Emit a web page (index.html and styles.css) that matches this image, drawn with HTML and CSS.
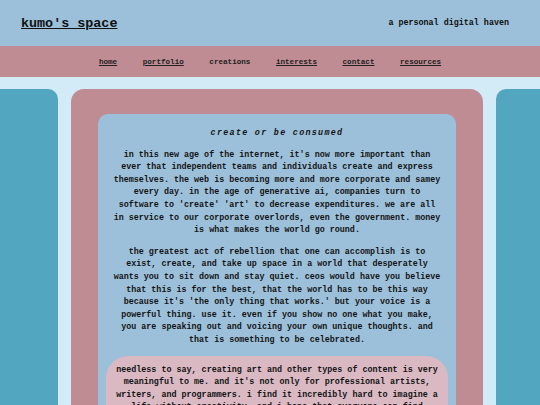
FILE: index.html
```html
<!DOCTYPE html>
<html>
<head>
<meta charset="utf-8">
<link rel="stylesheet" href="styles.css">
</head>
<body>
<header class="top">
  <a class="title" href="#">kumo's space</a>
  <span class="tagline">a personal digital haven</span>
</header>
<nav class="nav">
  <a href="#">home</a>
  <a href="#">portfolio</a>
  <span class="current">creations</span>
  <a href="#">interests</a>
  <a href="#">contact</a>
  <a href="#">resources</a>
</nav>
<div class="layout">
  <aside class="side side-left"></aside>
  <main class="center">
    <section class="box">
      <h2 class="heading">create or be consumed</h2>
      <p class="para">in this new age of the internet, it's now more important than ever that independent teams and individuals create and express themselves. the web is becoming more and more corporate and samey every day. in the age of generative ai, companies turn to software to 'create' 'art' to decrease expenditures. we are all in service to our corporate overlords, even the government. money is what makes the world go round.</p>
      <p class="para">the greatest act of rebellion that one can accomplish is to exist, create, and take up space in a world that desperately wants you to sit down and stay quiet. ceos would have you believe that this is for the best, that the world has to be this way because it's 'the only thing that works.' but your voice is a powerful thing. use it. even if you show no one what you make, you are speaking out and voicing your own unique thoughts. and that is something to be celebrated.</p>
      <div class="note">
        <p class="note-text">needless to say, creating art and other types of content is very meaningful to me. and it's not only for professional artists, writers, and programmers. i find it incredibly hard to imagine a life without creativity, and i hope that everyone can find something that they love to make.</p>
      </div>
    </section>
  </main>
  <aside class="side side-right"></aside>
</div>
</body>
</html>
```
FILE: styles.css
```css
html, body {
  margin: 0;
  padding: 0;
  overflow: hidden;
}
body {
  background: #d3ebf6;
  font-family: "Liberation Mono", "Courier New", monospace;
  font-size: 8.4px;
  font-weight: bold;
  color: #151515;
  line-height: 12.6px;
}
.top {
  height: 46px;
  background: #9cc0da;
  display: flex;
  align-items: center;
  justify-content: space-between;
  padding: 0 31px 0 21px;
  box-sizing: border-box;
}
.title {
  font-size: 13.4px;
  color: #111;
  text-decoration: underline;
  padding-top: 3px;
}
.tagline {
  color: #111;
}
.nav {
  height: 31px;
  background: #c08c94;
  display: flex;
  align-items: center;
  justify-content: center;
  gap: 25.6px;
  font-size: 7.6px;
  padding-top: 1px;
  box-sizing: border-box;
}
.nav a, .nav span {
  color: #222;
}
.nav a {
  text-decoration: underline;
}
.layout {
  display: flex;
  gap: 13px;
  margin-top: 12px;
  align-items: flex-start;
}
.side {
  width: 58px;
  height: 400px;
  background: #53a6bf;
  flex: none;
}
.side-left {
  border-radius: 0 10px 0 0;
}
.side-right {
  flex: 1;
  border-radius: 10px 0 0 0;
}
.center {
  width: 412px;
  flex: none;
  background: #c08c94;
  border-radius: 13px 13px 0 0;
  padding: 25px 27px;
  box-sizing: border-box;
}
.box {
  background: #9cc0da;
  border-radius: 10px 10px 0 0;
  padding: 13px 8px 20px;
}
.heading {
  margin: 0 0 9px;
  font-size: 8.4px;
  font-style: italic;
  font-weight: bold;
  letter-spacing: 1.3px;
  text-align: center;
  line-height: 12.6px;
}
.para {
  margin: 0 0 9px;
  padding: 0 6px;
  text-align: center;
}
.note {
  margin-top: 8px;
  background: #dab9c3;
  border-radius: 22px;
  padding: 8px 8px;
}
.note-text {
  margin: 0;
  text-align: center;
}
```
